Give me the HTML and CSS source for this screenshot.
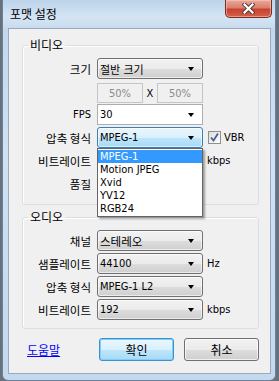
FILE: index.html
```html
<!DOCTYPE html>
<html>
<head>
    <meta charset="utf-8" />
    <title>포맷 설정</title>
    <link rel="stylesheet" href="styles.css">
</head>
<body>

<div class="window">
    <div class="titlebar">
        <span class="title">포맷 설정</span>
        <span class="close">
            <svg width="13" height="11" viewBox="0 0 13 11">
                <path d="M2.5 1.5 L10.5 9.5 M10.5 1.5 L2.5 9.5" stroke="#4a3a38" stroke-width="4" stroke-linecap="square" fill="none"/>
                <path d="M2.5 1.5 L10.5 9.5 M10.5 1.5 L2.5 9.5" stroke="#ffffff" stroke-width="2.2" stroke-linecap="square" fill="none"/>
            </svg>
        </span>
    </div>

    <div class="client">
        <fieldset class="group video">
            <legend>비디오</legend>
            <div class="rows">
                <label class="ko">크기</label>
                <div class="combo"><span>절반 크기</span><i class="arrow"></i></div>
                <span></span>

                <span></span>
                <div class="pct">
                    <span class="edit">50%</span>
                    <span class="x">X</span>
                    <span class="edit">50%</span>
                </div>
                <span></span>

                <label>FPS</label>
                <div class="combo editable"><span>30</span><i class="arrow"></i></div>
                <span></span>

                <label class="ko">압축 형식</label>
                <div class="combo-wrap">
                    <div class="combo focused"><span>MPEG-1</span><i class="arrow"></i></div>
                    <ul class="dropdown">
                        <li class="selected">MPEG-1</li>
                        <li>Motion JPEG</li>
                        <li>Xvid</li>
                        <li>YV12</li>
                        <li>RGB24</li>
                    </ul>
                </div>
                <span class="check">
                    <span class="box">
                        <svg width="11" height="11" viewBox="0 0 11 11">
                            <path d="M2 5.5 L4.5 8.5 L9 1.5" stroke="#4a5e92" stroke-width="1.8" fill="none"/>
                        </svg>
                    </span>
                    VBR
                </span>

                <label class="ko">비트레이트</label>
                <div class="combo"><span></span><i class="arrow"></i></div>
                <span class="unit">kbps</span>

                <label class="ko">품질</label>
                <div class="combo"><span></span><i class="arrow"></i></div>
                <span></span>
            </div>
        </fieldset>

        <fieldset class="group audio">
            <legend>오디오</legend>
            <div class="rows">
                <label class="ko">채널</label>
                <div class="combo"><span class="ko-val">스테레오</span><i class="arrow"></i></div>
                <span></span>

                <label class="ko">샘플레이트</label>
                <div class="combo"><span>44100</span><i class="arrow"></i></div>
                <span class="unit">Hz</span>

                <label class="ko">압축 형식</label>
                <div class="combo"><span>MPEG-1 L2</span><i class="arrow"></i></div>
                <span></span>

                <label class="ko">비트레이트</label>
                <div class="combo"><span>192</span><i class="arrow"></i></div>
                <span class="unit">kbps</span>
            </div>
        </fieldset>

        <div class="footer">
            <a class="help" href="#">도움말</a>
            <button class="btn default">확인</button>
            <button class="btn">취소</button>
        </div>
    </div>
</div>

</body>
</html>
```

FILE: styles.css
```css
body {
    margin: 0;
    padding: 0;
    background-color: #66717c;
    font-family: "DejaVu Sans Condensed", "DejaVu Sans", "Noto Sans CJK KR", sans-serif;
    font-size: 11px;
    color: #000000;
}

.window {
    box-sizing: border-box;
    width: 274px;
    height: 381px;
    margin-left: 2px;
    border: 1px solid #6d8199;
    border-top: none;
    border-radius: 0 0 6px 6px;
    background: linear-gradient(to bottom, #c0d6ec 0%, #cfe1f3 40%, #c4d9ee 100%);
    overflow: hidden;
}

.titlebar {
    display: flex;
    align-items: flex-start;
    height: 28px;
    padding-left: 7px;
    background: linear-gradient(to bottom, #bcd3ea 0%, #d4e4f4 60%, #c9dcef 100%);
}

.title {
    margin-top: 6px;
    font-family: "Noto Sans CJK KR", sans-serif;
    font-size: 12px;
    line-height: 16px;
}

.close {
    display: flex;
    align-items: center;
    justify-content: center;
    box-sizing: border-box;
    width: 47px;
    height: 18px;
    margin-left: auto;
    margin-right: 3px;
    border: 1px solid #7a2b22;
    border-top: none;
    border-radius: 0 0 5px 5px;
    background: linear-gradient(to bottom, #e9a99c 0%, #dc7e6d 45%, #c9412f 55%, #d2604a 100%);
    box-shadow: inset 0 0 0 1px rgba(255, 210, 200, 0.5);
}

.client {
    box-sizing: border-box;
    width: 263px;
    height: 346px;
    margin-left: 5px;
    border: 1px solid #9aaabc;
    background-color: #f0f0f0;
}

.group {
    box-sizing: border-box;
    width: 237px;
    margin: 0 0 0 13px;
    padding: 0;
    border: 1px solid #d5dfe5;
    border-radius: 3px;
    box-shadow: inset 1px 1px 0 #ffffff;
}

.group.video {
    margin-top: 8px;
    padding-bottom: 10px;
}

.group.audio {
    margin-top: 4px;
    padding-bottom: 8px;
}

.group legend {
    margin-left: 5px;
    padding: 0 2px;
    font-family: "Noto Sans CJK KR", sans-serif;
    font-size: 12px;
    line-height: 16px;
}

.rows {
    display: grid;
    grid-template-columns: 69px 106px auto;
    grid-auto-rows: 21px;
    column-gap: 5px;
    row-gap: 2px;
    padding-top: 5px;
}

.rows label {
    display: flex;
    align-items: center;
    justify-content: flex-end;
    padding-right: 1px;
}

.ko {
    font-family: "Noto Sans CJK KR", sans-serif;
    font-size: 11.5px;
}

.ko-val {
    font-family: "Noto Sans CJK KR", sans-serif;
    font-size: 11.5px;
}

.combo {
    box-sizing: border-box;
    display: flex;
    align-items: center;
    justify-content: space-between;
    height: 21px;
    padding: 0 8px 0 2px;
    border: 1px solid #707070;
    border-radius: 3px;
    background: linear-gradient(to bottom, #f2f2f2 0%, #ebebeb 50%, #dddddd 51%, #cfcfcf 100%);
    box-shadow: inset 0 0 0 1px rgba(255, 255, 255, 0.6);
    white-space: nowrap;
}

.combo.editable {
    border-color: #abadb3;
    border-radius: 0;
    background: #ffffff;
    box-shadow: none;
}

.combo.focused {
    border-color: #3c7fb1;
    background: linear-gradient(to bottom, #eaf6fd 0%, #d9f0fc 50%, #bee6fd 51%, #a7d9f5 100%);
}

.arrow {
    width: 0;
    height: 0;
    border-left: 3.5px solid transparent;
    border-right: 3.5px solid transparent;
    border-top: 4px solid #000000;
}

.pct {
    display: flex;
    align-items: center;
    justify-content: space-between;
    margin-top: 2px;
    height: 20px;
}

.edit {
    box-sizing: border-box;
    display: flex;
    align-items: center;
    justify-content: center;
    width: 46px;
    height: 20px;
    border: 1px solid #c5c5c5;
    color: #8a8a8a;
    background-color: #f0f0f0;
}

.x {
    width: 14px;
    text-align: center;
}

.combo-wrap {
    position: relative;
}

.dropdown {
    position: absolute;
    top: 21px;
    left: 0;
    box-sizing: border-box;
    width: 106px;
    margin: 0;
    padding: 1px 0;
    list-style: none;
    border: 1px solid #646464;
    background-color: #ffffff;
    box-shadow: 2px 2px 2px rgba(0, 0, 0, 0.35);
    z-index: 2;
}

.dropdown li {
    height: 13px;
    line-height: 13px;
    padding-left: 2px;
}

.dropdown li.selected {
    background-color: #3399ff;
    color: #ffffff;
}

.check {
    display: flex;
    align-items: center;
    gap: 3px;
}

.box {
    box-sizing: border-box;
    display: flex;
    align-items: center;
    justify-content: center;
    width: 13px;
    height: 13px;
    border: 1px solid #8e8f8f;
    background: linear-gradient(to bottom right, #dcdcdc, #ffffff);
}

.unit {
    display: flex;
    align-items: center;
    margin-left: -1px;
}

.footer {
    display: flex;
    align-items: center;
    margin-top: 9px;
    padding: 0 11px 0 18px;
}

.help {
    margin-right: auto;
    color: #0000ff;
    font-family: "Noto Sans CJK KR", sans-serif;
    font-size: 12px;
}

.btn {
    box-sizing: border-box;
    width: 75px;
    height: 23px;
    margin-left: 10px;
    padding: 0;
    border: 1px solid #707070;
    border-radius: 3px;
    background: linear-gradient(to bottom, #f2f2f2 0%, #ebebeb 50%, #dddddd 51%, #cfcfcf 100%);
    box-shadow: inset 0 0 0 1px rgba(255, 255, 255, 0.7);
    font-family: "Noto Sans CJK KR", sans-serif;
    font-size: 12px;
    color: #000000;
}

.btn.default {
    border-color: #3c8fd0;
    background: linear-gradient(to bottom, #eaf6fd 0%, #d9f0fc 50%, #bee6fd 51%, #a7d9f5 100%);
    box-shadow: inset 0 0 0 1px #7fd0f7;
}
```
